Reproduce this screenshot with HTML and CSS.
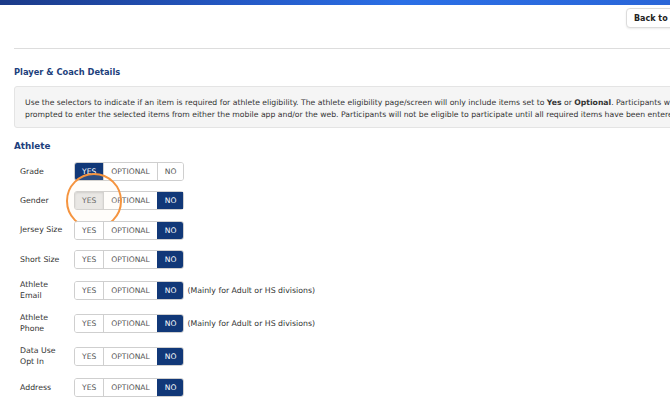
FILE: index.html
```html
<!DOCTYPE html>
<html lang="en">
  <head>
    <meta charset="UTF-8" />
    <meta name="viewport" content="width=device-width, initial-scale=1.0" />
    <title>Player &amp; Coach Details</title>
    <link rel="stylesheet" href="styles.css">
  </head>
  <body>
    <div class="topbar"></div>
    <div class="page">
      <div class="toolbar">
        <button class="back-btn">Back to Tournament</button>
      </div>
      <hr class="divider" />

      <h2 class="section-title">Player &amp; Coach Details</h2>
      <div class="info">
        Use the selectors to indicate if an item is required for athlete eligibility. The athlete eligibility page/screen will only include items set to <b>Yes</b> or <b>Optional</b>. Participants will be prompted to enter the selected items from either the mobile app and/or the web. Participants will not be eligible to participate until all required items have been entered.
      </div>

      <h3 class="group-title">Athlete</h3>
      <div class="fields">
        <div class="field">
          <div class="label">Grade</div>
          <div class="toggle">
            <span class="opt active">Yes</span><span class="opt">Optional</span><span class="opt">No</span>
          </div>
        </div>
        <div class="field">
          <div class="label">Gender</div>
          <div class="toggle">
            <span class="opt pressed">Yes</span><span class="opt">Optional</span><span class="opt active">No</span>
            <!-- click marker -->
            <span class="click-ring"></span>
          </div>
        </div>
        <div class="field">
          <div class="label">Jersey Size</div>
          <div class="toggle">
            <span class="opt">Yes</span><span class="opt">Optional</span><span class="opt active">No</span>
          </div>
        </div>
        <div class="field">
          <div class="label">Short Size</div>
          <div class="toggle">
            <span class="opt">Yes</span><span class="opt">Optional</span><span class="opt active">No</span>
          </div>
        </div>
        <div class="field">
          <div class="label">Athlete Email</div>
          <div class="toggle">
            <span class="opt">Yes</span><span class="opt">Optional</span><span class="opt active">No</span>
          </div>
          <div class="note">(Mainly for Adult or HS divisions)</div>
        </div>
        <div class="field">
          <div class="label">Athlete Phone</div>
          <div class="toggle">
            <span class="opt">Yes</span><span class="opt">Optional</span><span class="opt active">No</span>
          </div>
          <div class="note">(Mainly for Adult or HS divisions)</div>
        </div>
        <div class="field">
          <div class="label">Data Use Opt In</div>
          <div class="toggle">
            <span class="opt">Yes</span><span class="opt">Optional</span><span class="opt active">No</span>
          </div>
        </div>
        <div class="field">
          <div class="label">Address</div>
          <div class="toggle">
            <span class="opt">Yes</span><span class="opt">Optional</span><span class="opt active">No</span>
          </div>
        </div>
      </div>
    </div>
  </body>
</html>
```

FILE: styles.css
```css
html,
body {
  margin: 0;
  padding: 0;
}
body {
  width: 670px;
  height: 403px;
  overflow: hidden;
  background: #fff;
  font-family: "DejaVu Sans", Verdana, sans-serif;
  color: #333;
}
.topbar {
  height: 5px;
  background: linear-gradient(90deg, #1b3a88 0%, #2458c4 35%, #2b6fe6 60%, #2a66d8 100%);
}
.page {
  width: 712px;
  padding-left: 14px;
}
.toolbar {
  display: flex;
  justify-content: flex-end;
  padding-top: 3px;
}
.back-btn {
  width: 100px;
  height: 20px;
  padding: 0 7px;
  border: 1px solid #dcdcdc;
  border-radius: 4px;
  background: #fff;
  box-shadow: 0 1px 2px rgba(0, 0, 0, 0.08);
  font-family: "DejaVu Sans", Verdana, sans-serif;
  font-size: 8px;
  font-weight: bold;
  color: #222;
  text-align: left;
  white-space: nowrap;
  overflow: hidden;
}
.divider {
  margin: 20px 0 0;
  border: 0;
  border-top: 1px solid #dddddd;
}
.section-title {
  margin: 17px 0 0;
  font-size: 8.3px;
  line-height: 12px;
  font-weight: bold;
  color: #1d3f7c;
}
.info {
  margin-top: 8px;
  padding: 10px 10px 6px 10px;
  background: #f5f5f5;
  border: 1px solid #e4e4e4;
  border-radius: 3px;
  font-size: 7.7px;
  line-height: 12px;
  color: #333;
}
.group-title {
  margin: 11px 0 0;
  font-size: 8.8px;
  line-height: 14px;
  font-weight: bold;
  color: #1d3f7c;
}
.fields {
  display: flex;
  flex-direction: column;
  gap: 10.3px;
  margin-top: 9px;
  padding-left: 6px;
}
.field {
  display: flex;
  align-items: center;
  min-height: 19px;
}
.label {
  width: 50px;
  margin-right: 4px;
  font-size: 7.8px;
  line-height: 11.3px;
  color: #333;
}
.toggle {
  position: relative;
  display: flex;
  height: 19px;
  border: 1px solid #cfcfcf;
  border-radius: 3px;
  box-sizing: border-box;
}
.toggle .opt {
  display: flex;
  align-items: center;
  padding: 0 7px;
  font-size: 7.6px;
  text-transform: uppercase;
  color: #555;
  background: #fff;
  border-left: 1px solid #cfcfcf;
}
.toggle .opt:first-child {
  border-left: 0;
  border-radius: 2px 0 0 2px;
}
.toggle .opt:last-of-type {
  border-radius: 0 2px 2px 0;
}
.toggle .opt.active {
  background: #113878;
  border-color: #113878;
  color: #fff;
}
.toggle .opt.pressed {
  background: #e6e6e6;
  box-shadow: inset 0 1px 2px rgba(0, 0, 0, 0.12);
}
.click-ring {
  position: absolute;
  left: -9px;
  top: -19px;
  width: 52px;
  height: 52px;
  border: 2.5px solid #f5943f;
  border-radius: 50%;
  background: rgba(255, 236, 214, 0.12);
  pointer-events: none;
}
.note {
  margin-left: 3px;
  font-size: 7.8px;
  color: #333;
}
```
